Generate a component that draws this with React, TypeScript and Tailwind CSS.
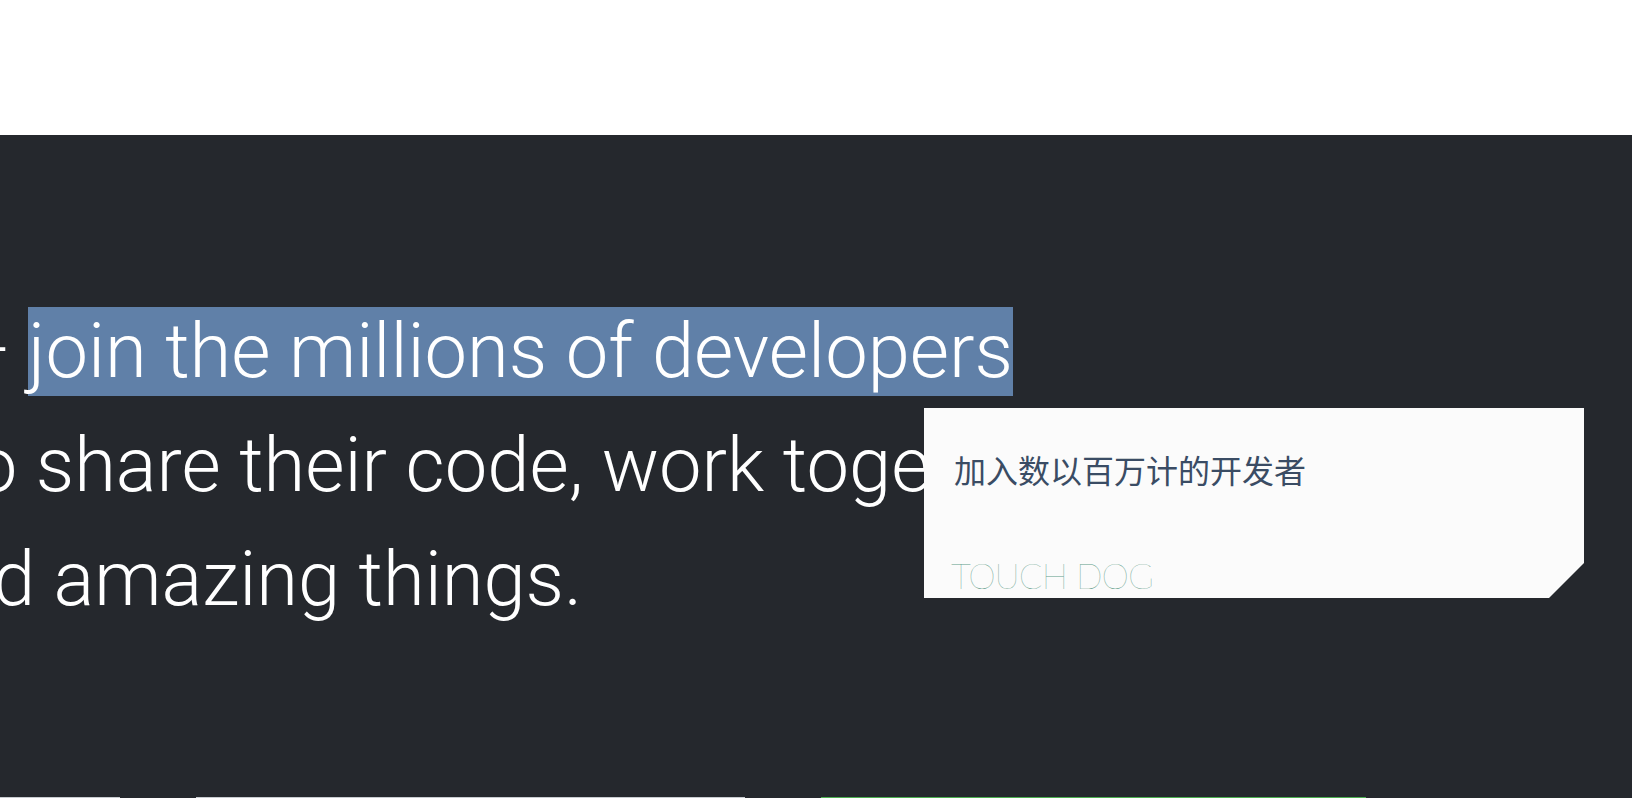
export default function App() {
  return (
    <div className="relative h-[798px] w-[1632px] overflow-hidden bg-white font-['Roboto',sans-serif]">
      <div className="h-[135px] bg-white" />
      <section className="relative h-[663px] overflow-hidden bg-[#25282d]">
        <div className="whitespace-nowrap pt-[160px] text-[75.9px] font-light leading-[114px] text-white">
          <div className="-ml-[49px]">
            — <span className="bg-[#6080a8]">join the millions of developers</span>
          </div>
          <div className="-ml-[49px]">to share their code, work together,</div>
          <div className="-ml-[125px]">build amazing things.</div>
        </div>

        <div className="absolute left-[924px] top-[273px] flex h-[190px] w-[660px] flex-col bg-[#fbfbfb] [clip-path:polygon(0_0,100%_0,100%_155px,625px_100%,0_100%)]">
          <p className="pl-[30px] pt-[41px] font-['Noto_Sans_CJK_SC',sans-serif] text-[32px] font-normal leading-[40px] text-[#3a4c64]">
            加入数以百万计的开发者
          </p>
          <p className="pl-[27px] pt-[69px] font-['Lato',sans-serif] text-[35px] font-thin leading-[34px] tracking-[-1px] text-[#5f9c89]">
            TOUCH DOG
          </p>
        </div>

        <div className="absolute bottom-0 left-0 flex h-px">
          <div className="w-[120px] bg-[#c8ccd0]" />
          <div className="ml-[76px] w-[549px] bg-[#c8ccd0]" />
          <div className="ml-[76px] w-[545px] bg-[#4caf50]" />
        </div>
      </section>
    </div>
  )
}
